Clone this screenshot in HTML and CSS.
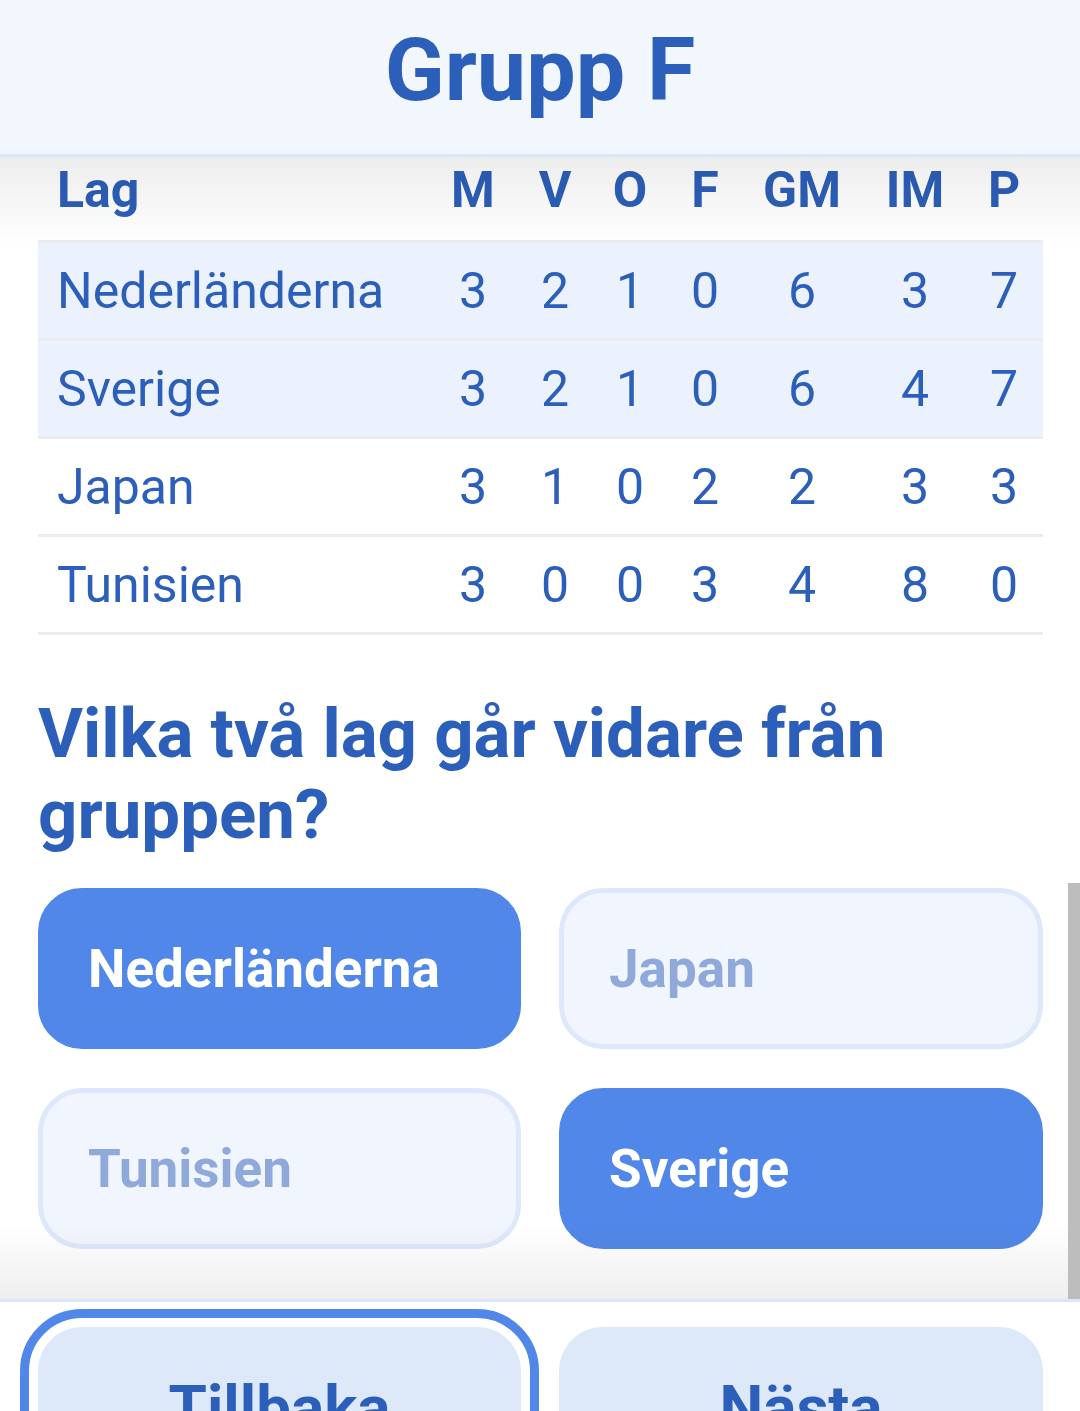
FILE: index.html
```html
<!DOCTYPE html>
<html lang="sv">
<head>
<meta charset="utf-8">
<title>Grupp F</title>
<link rel="stylesheet" href="styles.css">
</head>
<body>
<div class="app">
  <header class="topbar">
    <h1 class="title">Grupp F</h1>
  </header>
  <main class="content">
    <div class="table">
      <div class="row head">
        <div class="cell team">Lag</div>
        <div class="cell">M</div>
        <div class="cell">V</div>
        <div class="cell">O</div>
        <div class="cell">F</div>
        <div class="cell">GM</div>
        <div class="cell">IM</div>
        <div class="cell">P</div>
      </div>
      <div class="row hl">
        <div class="cell team">Nederländerna</div>
        <div class="cell">3</div><div class="cell">2</div><div class="cell">1</div><div class="cell">0</div><div class="cell">6</div><div class="cell">3</div><div class="cell">7</div>
      </div>
      <div class="row hl">
        <div class="cell team">Sverige</div>
        <div class="cell">3</div><div class="cell">2</div><div class="cell">1</div><div class="cell">0</div><div class="cell">6</div><div class="cell">4</div><div class="cell">7</div>
      </div>
      <div class="row">
        <div class="cell team">Japan</div>
        <div class="cell">3</div><div class="cell">1</div><div class="cell">0</div><div class="cell">2</div><div class="cell">2</div><div class="cell">3</div><div class="cell">3</div>
      </div>
      <div class="row">
        <div class="cell team">Tunisien</div>
        <div class="cell">3</div><div class="cell">0</div><div class="cell">0</div><div class="cell">3</div><div class="cell">4</div><div class="cell">8</div><div class="cell">0</div>
      </div>
    </div>
    <h2 class="question">Vilka två lag går vidare från gruppen?</h2>
    <div class="choices">
      <button class="choice selected">Nederländerna</button>
      <button class="choice">Japan</button>
      <button class="choice">Tunisien</button>
      <button class="choice selected">Sverige</button>
    </div>
    <div class="scrollthumb"></div>
  </main>
  <footer class="bottombar">
    <button class="nav focused">Tillbaka</button>
    <button class="nav">Nästa</button>
  </footer>
</div>
</body>
</html>
```

FILE: styles.css
```css
html, body {
  margin: 0;
  padding: 0;
  background: #ffffff;
}
body {
  font-family: Roboto, "Noto Sans", "Liberation Sans", sans-serif;
  color: #2c5fb9;
}
.app {
  width: 1080px;
  height: 1411px;
  overflow: hidden;
  display: flex;
  flex-direction: column;
}
.topbar {
  height: 154px;
  flex: none;
  background: #f2f7fe;
  border-bottom: 3px solid #dbe6f7;
  box-sizing: content-box;
}
.title {
  margin: 0;
  padding-top: 26px;
  font-size: 88px;
  line-height: 88px;
  font-weight: 700;
  text-align: center;
  color: #2c5fb9;
}
.content {
  position: relative;
  height: 1142px;
  flex: none;
  overflow: hidden;
  padding: 0 37px 0 38px;
  box-sizing: border-box;
}
.content::before {
  content: "";
  position: absolute;
  left: 0;
  right: 0;
  top: 0;
  height: 90px;
  background: linear-gradient(to bottom, rgba(0,0,0,0.07), rgba(0,0,0,0));
  pointer-events: none;
}
.content::after {
  content: "";
  position: absolute;
  left: 0;
  right: 0;
  bottom: 0;
  height: 75px;
  background: linear-gradient(to top, rgba(0,0,0,0.065), rgba(0,0,0,0));
  pointer-events: none;
}
.scrollthumb {
  position: absolute;
  right: 0;
  top: 726px;
  width: 12px;
  height: 416px;
  background: #bdbdbd;
  z-index: 2;
}
.table {
  width: 1005px;
}
.row {
  display: grid;
  grid-template-columns: 387px 96px 68px 82px 68px 126px 100px 78px;
  height: 98px;
  box-sizing: border-box;
  border-bottom: 3px solid #ececec;
  align-items: center;
  font-size: 50px;
  font-weight: 400;
}
.row.head {
  height: 86px;
  padding-bottom: 17px;
  font-weight: 700;
}
.row.hl {
  background: #ebf2fd;
}
.cell {
  text-align: center;
  white-space: nowrap;
}
.cell.team {
  text-align: left;
  padding-left: 19px;
}
.question {
  margin: 58px 0 33px 0;
  font-size: 69px;
  line-height: 81px;
  font-weight: 700;
  color: #2c5fb9;
  width: 1005px;
}
.choices {
  display: grid;
  grid-template-columns: 483px 484px;
  column-gap: 38px;
  row-gap: 39px;
  width: 1005px;
}
.choice {
  height: 161px;
  border-radius: 44px;
  border: 5px solid #dde8fb;
  background: #f0f5fe;
  color: #8fa9da;
  font-family: Roboto, "Noto Sans", "Liberation Sans", sans-serif;
  font-size: 53px;
  font-weight: 700;
  text-align: left;
  padding: 0 0 0 45px;
  display: flex;
  align-items: center;
  box-sizing: border-box;
}
.choice.selected {
  background: #5187e8;
  border-color: #5187e8;
  color: #ffffff;
}
.bottombar {
  flex: none;
  border-top: 3px solid #dbe6f7;
  padding: 25px 37px 0 38px;
  display: grid;
  grid-template-columns: 483px 484px;
  column-gap: 38px;
  align-items: start;
}
.nav {
  height: 161px;
  border-radius: 44px;
  border: none;
  background: #dde8f9;
  color: #2c5fb9;
  font-family: Roboto, "Noto Sans", "Liberation Sans", sans-serif;
  font-size: 62px;
  font-weight: 700;
  text-align: center;
  padding: 0;
}
.nav.focused {
  outline: 9px solid #5187e8;
  outline-offset: 9px;
}
```
